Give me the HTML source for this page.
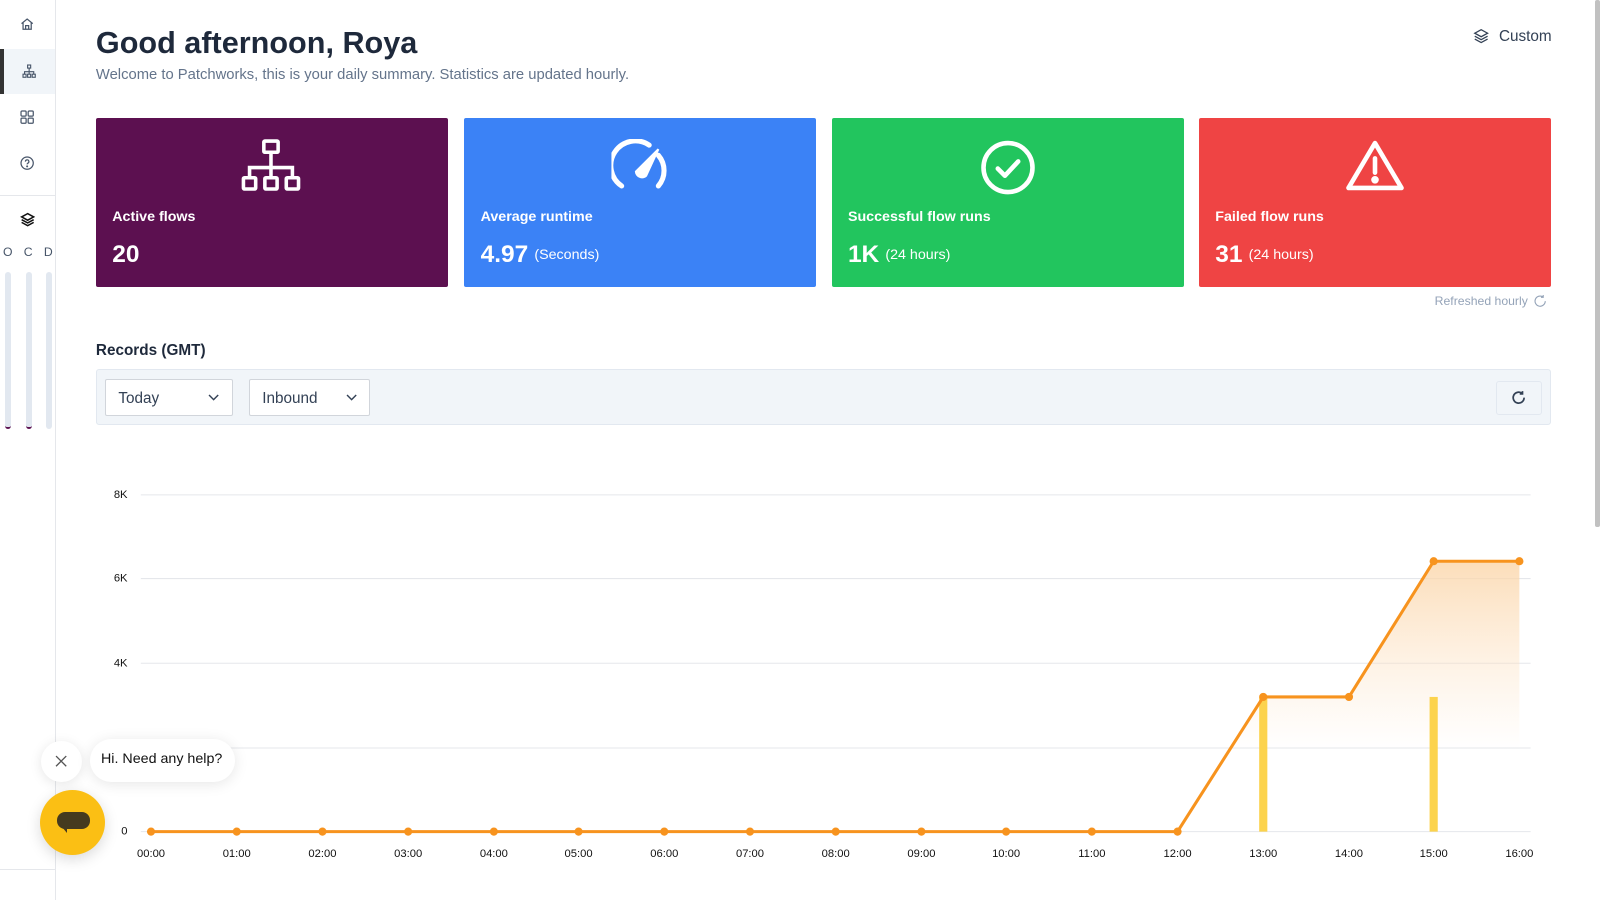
<!DOCTYPE html>
<html><head><meta charset="utf-8"><style>
*{box-sizing:border-box;margin:0;padding:0}
html,body{width:1600px;height:900px;overflow:hidden;background:#fff}
#w{zoom:1.0204;width:1568px;height:882px;position:relative;font-family:"Liberation Sans",sans-serif;color:#1e293b}
.side{position:absolute;left:0;top:0;width:55px;height:882px;border-right:1px solid #e5e7eb;background:#fff}
.si{position:absolute;left:0;width:54px;height:44px;display:flex;align-items:center;justify-content:center}
.card{position:absolute;top:116px;width:345px;height:165px;border-radius:2px;color:#fff}
.card .t{position:absolute;left:16px;top:89px;font-weight:bold;font-size:14px}
.card .v{position:absolute;left:16px;top:120px;font-weight:bold;font-size:24px}
.card .v span{font-weight:normal;font-size:14px;margin-left:6px;vertical-align:3px}
.card svg{position:absolute;left:50%;top:20px;transform:translateX(-50%)}
.sel{position:absolute;top:371px;height:37px;border:1px solid #d1d5db;background:#fff;border-radius:2px;font-size:15px;color:#334155;padding:10px 12px}
</style></head><body><div id="w">
<div class="side">
 <div class="si" style="top:2px"><svg width="14" height="14" viewBox="0 0 14 14" fill="none" stroke="#475569" stroke-width="1.2"><path d="M1.5 6.5L7 2l5.5 4.5M3 5.5V12h8V5.5M5.5 12V8.5h3V12"/></svg></div>
 <div class="si" style="top:48px;background:#f1f5f9;border-left:4px solid #333"><svg width="14" height="14" viewBox="0 0 14 14" fill="none" stroke="#475569" stroke-width="1.1"><rect x="5.5" y="1" width="3" height="3"/><rect x="1" y="10" width="3" height="3"/><rect x="5.5" y="10" width="3" height="3"/><rect x="10" y="10" width="3" height="3"/><path d="M7 4v6M2.5 10V7.5h9V10"/></svg></div>
 <div class="si" style="top:93px"><svg width="14" height="14" viewBox="0 0 14 14" fill="none" stroke="#475569" stroke-width="1.2"><rect x="1" y="1" width="5" height="5" rx="1"/><rect x="8" y="1" width="5" height="5" rx="1"/><rect x="1" y="8" width="5" height="5" rx="1"/><rect x="8" y="8" width="5" height="5" rx="1"/></svg></div>
 <div class="si" style="top:138px"><svg width="14" height="14" viewBox="0 0 14 14" fill="none" stroke="#475569" stroke-width="1.2"><circle cx="7" cy="7" r="6"/><path d="M5.3 5.5a1.7 1.7 0 1 1 2.4 1.5c-.5.3-.7.6-.7 1.2"/><circle cx="7" cy="10.2" r=".4" fill="#475569"/></svg></div>
 <div style="position:absolute;top:191px;left:0;width:54px;border-top:1px solid #e5e7eb"></div>
 <div class="si" style="top:193px"><svg width="15" height="15" viewBox="0 0 14 14" fill="none" stroke="#111" stroke-width="1.4"><path d="M7 1.5L1.5 4.5 7 7.5l5.5-3z"/><path d="M1.5 7L7 10l5.5-3M1.5 9.5L7 12.5l5.5-3"/></svg></div>
 <div style="position:absolute;top:240px;left:3px;font-size:12px;color:#475569;letter-spacing:11px">OCD</div>
 <div style="position:absolute;left:5px;top:267px;width:6px;height:153px;background:#e2e8f0;border-radius:3px;border-bottom:2px solid #5b1050"></div>
 <div style="position:absolute;left:25px;top:267px;width:6px;height:153px;background:#e2e8f0;border-radius:3px;border-bottom:2px solid #5b1050"></div>
 <div style="position:absolute;left:45px;top:267px;width:6px;height:153px;background:#e2e8f0;border-radius:3px"></div>
 <div style="position:absolute;top:852px;left:0;width:54px;border-top:1px solid #e5e7eb"></div>
</div>
<div style="position:absolute;left:1563px;top:0;width:5px;height:516px;background:#c1c1c1;border-radius:2px"></div>
<div style="position:absolute;left:94px;top:25px;font-size:30px;font-weight:bold;color:#1e293b">Good afternoon, Roya</div>
<div style="position:absolute;left:94px;top:66px;font-size:14.5px;color:#64748b">Welcome to Patchworks, this is your daily summary. Statistics are updated hourly.</div>
<div style="position:absolute;left:1443px;top:27px;font-size:15px;color:#334155;display:flex;align-items:center;gap:8px"><svg width="18" height="16" viewBox="0 0 14 14" fill="none" stroke="#334155" stroke-width="1.1"><path d="M7 1.5L1.5 4.5 7 7.5l5.5-3z"/><path d="M1.5 7L7 10l5.5-3M1.5 9.5L7 12.5l5.5-3"/></svg>Custom</div>

<div class="card" style="left:94px;background:#5c1050"><svg width="60" height="52" viewBox="0 0 60 52" fill="none" stroke="#fff" stroke-width="3.5"><rect x="22" y="2" width="14" height="11" rx="1"/><rect x="2" y="38" width="12" height="11" rx="1"/><rect x="23" y="38" width="12" height="11" rx="1"/><rect x="44" y="38" width="12" height="11" rx="1"/><path d="M29 13v25M8 38v-10h42v10"/></svg><div class="t">Active flows</div><div class="v">20</div></div>
<div class="card" style="left:455px;background:#3b82f6"><svg width="56" height="52" viewBox="0 0 56 52" fill="none" stroke="#fff" stroke-width="5" stroke-linecap="round"><path d="M10 46A23 23 0 0 1 37 6M46 16A23 23 0 0 1 46 46"/><path d="M24 32L46 10 34 36a6 6 0 0 1-10-4z" fill="#fff" stroke-width="2"/></svg><div class="t">Average runtime</div><div class="v">4.97<span>(Seconds)</span></div></div>
<div class="card" style="left:815px;background:#22c55e"><svg width="56" height="56" viewBox="0 0 56 56" fill="none" stroke="#fff" stroke-width="4.5" stroke-linecap="round" stroke-linejoin="round"><circle cx="28" cy="28" r="24"/><path d="M18 29l7 7 13-14"/></svg><div class="t">Successful flow runs</div><div class="v">1K<span>(24 hours)</span></div></div>
<div class="card" style="left:1175px;background:#ef4444"><svg width="58" height="52" viewBox="0 0 58 52" fill="none" stroke="#fff" stroke-width="4.5" stroke-linejoin="round"><path d="M29 4L3 48h52z"/><path d="M29 19v14" stroke-linecap="round"/><circle cx="29" cy="40" r="1.5" fill="#fff"/></svg><div class="t">Failed flow runs</div><div class="v">31<span>(24 hours)</span></div></div>
<div style="position:absolute;left:1406px;top:288px;font-size:12px;color:#94a3b8;display:flex;align-items:center;gap:5px">Refreshed hourly <svg width="14" height="14" viewBox="0 0 14 14" fill="none" stroke="#94a3b8" stroke-width="1.1"><path d="M12 7A5 5 0 1 1 10 3M10 1v2.2h-2.2"/></svg></div>

<div style="position:absolute;left:94px;top:335px;font-size:15px;font-weight:bold">Records (GMT)</div>
<div style="position:absolute;left:94px;top:362px;width:1426px;height:55px;background:#f1f5f9;border:1px solid #e2e8f0;border-radius:3px"></div>
<div class="sel" style="left:103px;width:125px">Today<svg style="position:absolute;right:12px;top:14px" width="11" height="7" viewBox="0 0 11 7" fill="none" stroke="#334155" stroke-width="1.4"><path d="M1 1l4.5 4.5L10 1"/></svg></div>
<div class="sel" style="left:244px;width:119px">Inbound<svg style="position:absolute;right:12px;top:14px" width="11" height="7" viewBox="0 0 11 7" fill="none" stroke="#334155" stroke-width="1.4"><path d="M1 1l4.5 4.5L10 1"/></svg></div>
<div style="position:absolute;left:1466px;top:373px;width:45px;height:34px;border:1px solid #e2e8f0;border-radius:3px;background:#f1f5f9;display:flex;align-items:center;justify-content:center"><svg width="15" height="15" viewBox="0 0 14 14" fill="none" stroke="#334155" stroke-width="1.6"><path d="M12 7A5 5 0 1 1 10 3M10.5 1v2.5H8"/></svg></div>

<svg style="position:absolute;left:0;top:0" width="1568" height="882">
<defs><linearGradient id="g" x1="0" y1="0" x2="0" y2="1"><stop offset="0" stop-color="#fbd5a8" stop-opacity=".8"/><stop offset=".7" stop-color="#fde3c6" stop-opacity="0"/></linearGradient></defs>
<g stroke="#e5e7eb" stroke-width="1"><line x1="138" y1="485" x2="1500" y2="485"/><line x1="138" y1="567" x2="1500" y2="567"/><line x1="138" y1="650" x2="1500" y2="650"/><line x1="138" y1="733" x2="1500" y2="733"/><line x1="138" y1="815" x2="1500" y2="815"/></g>
<g font-size="11" fill="#111" font-family="Liberation Sans" text-anchor="end"><text x="125" y="488">8K</text><text x="125" y="570">6K</text><text x="125" y="653">4K</text><text x="125" y="818">0</text></g>
<path d="M1154 815L1238 683 1322 683 1405 550 1489 550 1489 815z" fill="url(#g)"/>
<rect x="1234" y="683" width="8" height="132" fill="#fcd34d"/><rect x="1401" y="683" width="8" height="132" fill="#fcd34d"/>
<path d="M148 815H1154L1238 683H1322L1405 550H1489" fill="none" stroke="#f7931e" stroke-width="3"/>
<g fill="#f7931e">
<circle cx="148" cy="815" r="4"/><circle cx="232" cy="815" r="4"/><circle cx="316" cy="815" r="4"/><circle cx="400" cy="815" r="4"/><circle cx="484" cy="815" r="4"/><circle cx="567" cy="815" r="4"/><circle cx="651" cy="815" r="4"/><circle cx="735" cy="815" r="4"/><circle cx="819" cy="815" r="4"/><circle cx="903" cy="815" r="4"/><circle cx="986" cy="815" r="4"/><circle cx="1070" cy="815" r="4"/><circle cx="1154" cy="815" r="4"/><circle cx="1238" cy="683" r="4"/><circle cx="1322" cy="683" r="4"/><circle cx="1405" cy="550" r="4"/><circle cx="1489" cy="550" r="4"/></g>
<g font-size="11" fill="#111" font-family="Liberation Sans" text-anchor="middle">
<text x="148" y="840">00:00</text><text x="232" y="840">01:00</text><text x="316" y="840">02:00</text><text x="400" y="840">03:00</text><text x="484" y="840">04:00</text><text x="567" y="840">05:00</text><text x="651" y="840">06:00</text><text x="735" y="840">07:00</text><text x="819" y="840">08:00</text><text x="903" y="840">09:00</text><text x="986" y="840">10:00</text><text x="1070" y="840">11:00</text><text x="1154" y="840">12:00</text><text x="1238" y="840">13:00</text><text x="1322" y="840">14:00</text><text x="1405" y="840">15:00</text><text x="1489" y="840">16:00</text></g>
</svg>

<div style="position:absolute;left:40px;top:726px;width:40px;height:40px;border-radius:50%;background:#fff;box-shadow:0 2px 12px rgba(0,0,0,.1);display:flex;align-items:center;justify-content:center"><svg width="14" height="14" viewBox="0 0 14 14" stroke="#555" stroke-width="1.3"><path d="M2 2l10 10M12 2L2 12"/></svg></div>
<div style="position:absolute;left:88px;top:724px;width:142px;height:42px;border-radius:21px;background:#fff;box-shadow:0 2px 14px rgba(0,0,0,.1);font-size:14px;color:#111;padding:12px 0 0 11px">Hi. Need any help?</div>
<div style="position:absolute;left:39px;top:774px;width:64px;height:64px;border-radius:50%;background:#fbbf14;box-shadow:0 4px 14px rgba(0,0,0,.15)"><div style="position:absolute;left:17px;top:22px;width:32px;height:16px;border-radius:8px;background:#453a1f"></div><div style="position:absolute;left:22px;top:36px;width:0;height:0;border-left:5px solid transparent;border-top:6px solid #453a1f"></div></div>
</div></body></html>
